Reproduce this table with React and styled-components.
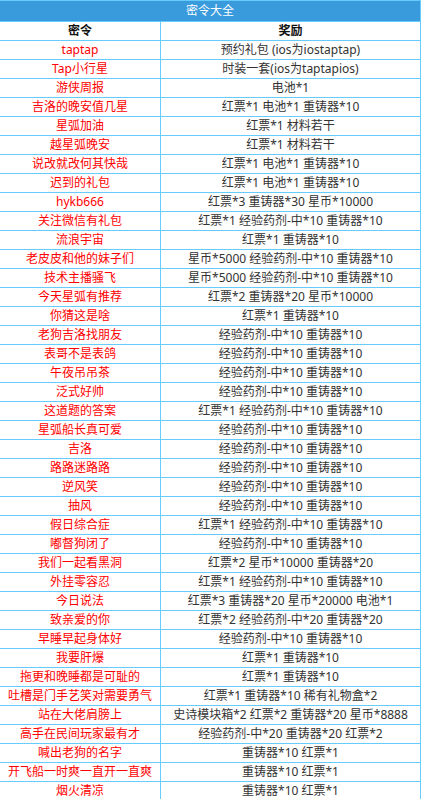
import React from 'react';
import styled, { createGlobalStyle } from 'styled-components';

const codes = [
    ["taptap", "预约礼包 (ios为iostaptap)"],
    ["Tap小行星", "时装一套(ios为taptapios)"],
    ["游侠周报", "电池*1"],
    ["吉洛的晚安值几星", "红票*1 电池*1 重铸器*10"],
    ["星弧加油", "红票*1 材料若干"],
    ["越星弧晚安", "红票*1 材料若干"],
    ["说改就改何其快哉", "红票*1 电池*1 重铸器*10"],
    ["迟到的礼包", "红票*1 电池*1 重铸器*10"],
    ["hykb666", "红票*3 重铸器*30 星币*10000"],
    ["关注微信有礼包", "红票*1 经验药剂-中*10 重铸器*10"],
    ["流浪宇宙", "红票*1 重铸器*10"],
    ["老皮皮和他的妹子们", "星币*5000 经验药剂-中*10 重铸器*10"],
    ["技术主播骚飞", "星币*5000 经验药剂-中*10 重铸器*10"],
    ["今天星弧有推荐", "红票*2 重铸器*20 星币*10000"],
    ["你猜这是啥", "红票*1 重铸器*10"],
    ["老狗吉洛找朋友", "经验药剂-中*10 重铸器*10"],
    ["表哥不是表鸽", "经验药剂-中*10 重铸器*10"],
    ["午夜吊吊茶", "经验药剂-中*10 重铸器*10"],
    ["泛式好帅", "经验药剂-中*10 重铸器*10"],
    ["这道题的答案", "红票*1 经验药剂-中*10 重铸器*10"],
    ["星弧船长真可爱", "经验药剂-中*10 重铸器*10"],
    ["吉洛", "经验药剂-中*10 重铸器*10"],
    ["路路迷路路", "经验药剂-中*10 重铸器*10"],
    ["逆风笑", "经验药剂-中*10 重铸器*10"],
    ["抽风", "经验药剂-中*10 重铸器*10"],
    ["假日综合症", "红票*1 经验药剂-中*10 重铸器*10"],
    ["嘟督狗闭了", "经验药剂-中*10 重铸器*10"],
    ["我们一起看黑洞", "红票*2 星币*10000 重铸器*20"],
    ["外挂零容忍", "红票*1 经验药剂-中*10 重铸器*10"],
    ["今日说法", "红票*3 重铸器*20 星币*20000 电池*1"],
    ["致亲爱的你", "红票*2 经验药剂-中*20 重铸器*20"],
    ["早睡早起身体好", "经验药剂-中*10 重铸器*10"],
    ["我要肝爆", "红票*1 重铸器*10"],
    ["拖更和晚睡都是可耻的", "红票*1 重铸器*10"],
    ["吐槽是门手艺笑对需要勇气", "红票*1 重铸器*10 稀有礼物盒*2"],
    ["站在大佬肩膀上", "史诗模块箱*2 红票*2 重铸器*20 星币*8888"],
    ["高手在民间玩家最有才", "经验药剂-中*20 重铸器*20 红票*2"],
    ["喊出老狗的名字", "重铸器*10 红票*1"],
    ["开飞船一时爽一直开一直爽", "重铸器*10 红票*1"],
    ["烟火清凉", "重铸器*10 红票*1"],
];

function App() {
    return (
        <>
        <GlobalStyle/>
        <Board>
            <Title>密令大全</Title>
            <Row>
                <Cell head>密令</Cell>
                <Cell head>奖励</Cell>
            </Row>
            {codes.map(([code, reward]) => (
                <Row key={code}>
                    <Cell code>{code}</Cell>
                    <Cell>{reward}</Cell>
                </Row>
            ))}
        </Board>
        </>
    )
}

const GlobalStyle = createGlobalStyle`
    body{
        margin:0;
        background:#fff;
        font-family:"Noto Sans","Noto Sans CJK SC",sans-serif;
        font-size:12px;
    }
`;

const Board = styled.div`
    width:420px;
    border-top:1px solid #66ccff;
    border-right:1px solid #66ccff;
`;

const Title = styled.div`
    height:20px;
    line-height:20px;
    background-color:#3a9bdc;
    color:#fff;
    text-align:center;
    border-bottom:1px solid #66ccff;
`;

const Row = styled.div`
    display:grid;
    grid-template-columns:161px 259px;
    border-bottom:1px solid #66ccff;
`;

const Cell = styled.div`
    height:18px;
    line-height:18px;
    text-align:center;
    white-space:nowrap;
    color:${props => props.code ? '#ff0000' : props.head ? '#111' : '#333'};
    font-weight:${props => props.head ? 700 : 400};
    &:first-child{
        border-right:1px solid #66ccff;
    }
`;

export default App;
